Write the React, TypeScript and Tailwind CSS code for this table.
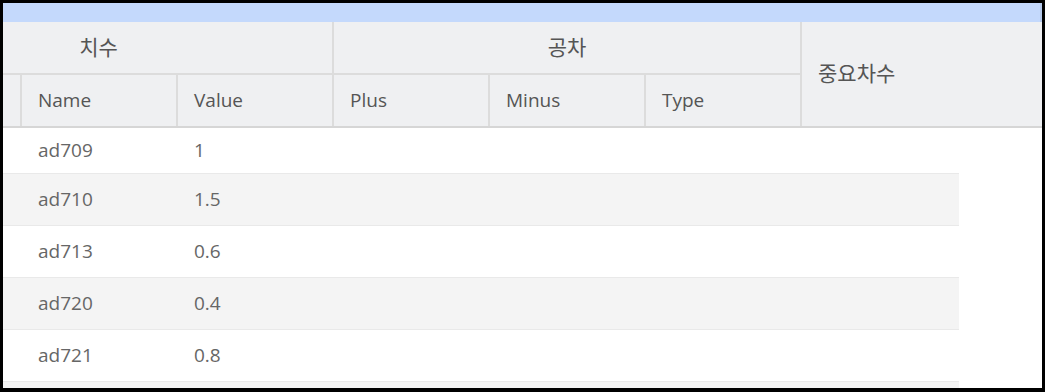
import React from "react";

type Row = { name: string; value: string };

const rows: Row[] = [
  { name: "ad709", value: "1" },
  { name: "ad710", value: "1.5" },
  { name: "ad713", value: "0.6" },
  { name: "ad720", value: "0.4" },
  { name: "ad721", value: "0.8" },
  { name: "", value: "" },
];

const font = { fontFamily: '"Open Sans", "Noto Sans CJK KR", sans-serif' };

export default function App() {
  return (
    <div
      className="w-[1045px] h-[392px] overflow-hidden bg-white border-[3px] border-b-4 border-black flex flex-col"
      style={font}
    >
      {/* title strip */}
      <div className="h-[19px] shrink-0 bg-[#c4d9fc] border-r-2 border-[#b4c8ea]"></div>

      {/* header: grouped columns */}
      <div className="shrink-0 grid grid-cols-[19px_156px_156px_156px_156px_156px_1fr] grid-rows-[53px_51px] bg-[#eff0f2] text-[19px] text-[#555] border-b-2 border-[#d6d6d6]">
        <div className="col-span-3 flex items-center justify-center pr-[138px] border-r-2 border-b-2 border-[#dcdcdc] text-[21px]">
          치수
        </div>
        <div className="col-span-3 flex items-center justify-center border-r-2 border-b-2 border-[#dcdcdc] text-[21px]">
          공차
        </div>
        <div className="row-span-2 flex items-center pl-4 text-[21px]">
          중요차수
        </div>
        <div className="border-r-2 border-[#dcdcdc]"></div>
        <div className="flex items-center pl-4 border-r-2 border-[#dcdcdc]">Name</div>
        <div className="flex items-center pl-4 border-r-2 border-[#dcdcdc]">Value</div>
        <div className="flex items-center pl-4 border-r-2 border-[#dcdcdc]">Plus</div>
        <div className="flex items-center pl-4 border-r-2 border-[#dcdcdc]">Minus</div>
        <div className="flex items-center pl-4 border-r-2 border-[#dcdcdc]">Type</div>
      </div>

      {/* body rows */}
      <div className="w-[956px] text-[19px] text-[#666]">
        {rows.map((r, i) => (
          <div
            key={i}
            className={`grid grid-cols-[19px_156px_156px_156px_156px_156px_157px] border-b border-[#e9e9e9] ${
              i === 0 ? "h-[46px]" : "h-[52px]"
            } ${i % 2 === 1 ? "bg-[#f4f4f4]" : "bg-white"}`}
          >
            <div></div>
            <div className="flex items-center pl-4">{r.name}</div>
            <div className="flex items-center pl-4">{r.value}</div>
            <div></div>
            <div></div>
            <div></div>
            <div></div>
          </div>
        ))}
      </div>
    </div>
  );
}
